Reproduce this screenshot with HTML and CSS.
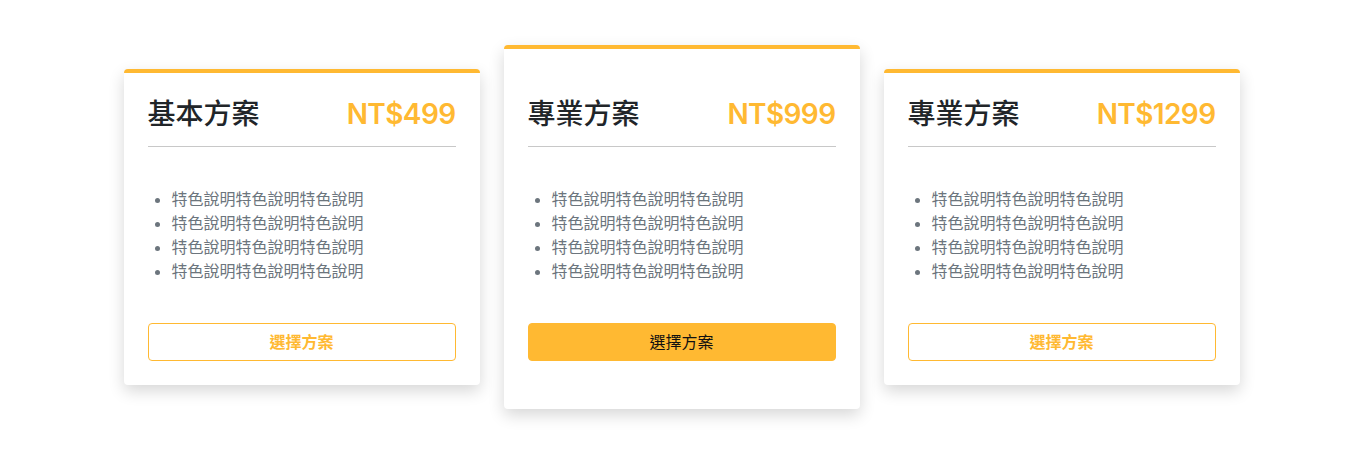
FILE: index.html
```html
<!DOCTYPE html>
<html lang="zh-Hant">
<head>
<meta charset="utf-8">
<title>方案</title>
<link rel="stylesheet" href="styles.css">
</head>
<body>
<section class="pricing">
  <div class="container">
    <div class="row">
      <div class="card">
        <div class="card-head">
          <h3 class="plan-name">基本方案</h3>
          <span class="plan-price">NT$499</span>
        </div>
        <ul class="features">
          <li>特色說明特色說明特色說明</li>
          <li>特色說明特色說明特色說明</li>
          <li>特色說明特色說明特色說明</li>
          <li>特色說明特色說明特色說明</li>
        </ul>
        <button class="btn btn-outline">選擇方案</button>
      </div>
      <div class="card card-featured">
        <div class="card-head">
          <h3 class="plan-name">專業方案</h3>
          <span class="plan-price">NT$999</span>
        </div>
        <ul class="features">
          <li>特色說明特色說明特色說明</li>
          <li>特色說明特色說明特色說明</li>
          <li>特色說明特色說明特色說明</li>
          <li>特色說明特色說明特色說明</li>
        </ul>
        <button class="btn btn-solid">選擇方案</button>
      </div>
      <div class="card">
        <div class="card-head">
          <h3 class="plan-name">專業方案</h3>
          <span class="plan-price">NT$1299</span>
        </div>
        <ul class="features">
          <li>特色說明特色說明特色說明</li>
          <li>特色說明特色說明特色說明</li>
          <li>特色說明特色說明特色說明</li>
          <li>特色說明特色說明特色說明</li>
        </ul>
        <button class="btn btn-outline">選擇方案</button>
      </div>
    </div>
  </div>
</section>
</body>
</html>
```
FILE: styles.css
```css
* { box-sizing: border-box; }
html, body { margin: 0; padding: 0; background: #fff; }
body {
  font-family: Inter, "Noto Sans CJK TC", "Noto Sans", sans-serif;
  color: #212529;
  font-size: 16px;
  line-height: 1.5;
}
.pricing { padding: 45px 0; }
.container {
  width: 1140px;
  margin: 0 auto;
  padding: 0 12px;
}
.row {
  display: flex;
  gap: 24px;
  align-items: center;
}
.card {
  flex: 1 1 0;
  background: #fff;
  border-top: 4px solid #ffb932;
  border-radius: 4px;
  box-shadow: 0 6px 16px rgba(0, 0, 0, 0.16);
  padding: 24px;
  display: flex;
  flex-direction: column;
}
.card-featured { padding: 48px 24px; }
.card-head {
  display: flex;
  justify-content: space-between;
  align-items: center;
  padding-top: 1px;
  padding-bottom: 14px;
  border-bottom: 1px solid #c8c8c8;
}
.plan-name {
  margin: 0;
  font-size: 28px;
  font-weight: 500;
  line-height: 1.2;
  color: #212529;
}
.plan-price {
  font-size: 28px;
  font-weight: 600;
  letter-spacing: -0.6px;
  line-height: 1.2;
  color: #ffb932;
}
.features {
  margin: 40px 0;
  padding-left: 24px;
  color: #6c757d;
  font-size: 16px;
  line-height: 24px;
}
.btn {
  display: block;
  width: 100%;
  height: 38px;
  border-radius: 4px;
  font-family: inherit;
  font-size: 16px;
  line-height: 24px;
  padding: 6px 12px;
  cursor: pointer;
}
.btn-outline {
  background: #fff;
  border: 1px solid #ffb932;
  color: #ffb932;
  font-weight: 700;
}
.btn-solid {
  background: #ffb932;
  border: 1px solid #ffb932;
  color: #111;
  font-weight: 400;
}
```
